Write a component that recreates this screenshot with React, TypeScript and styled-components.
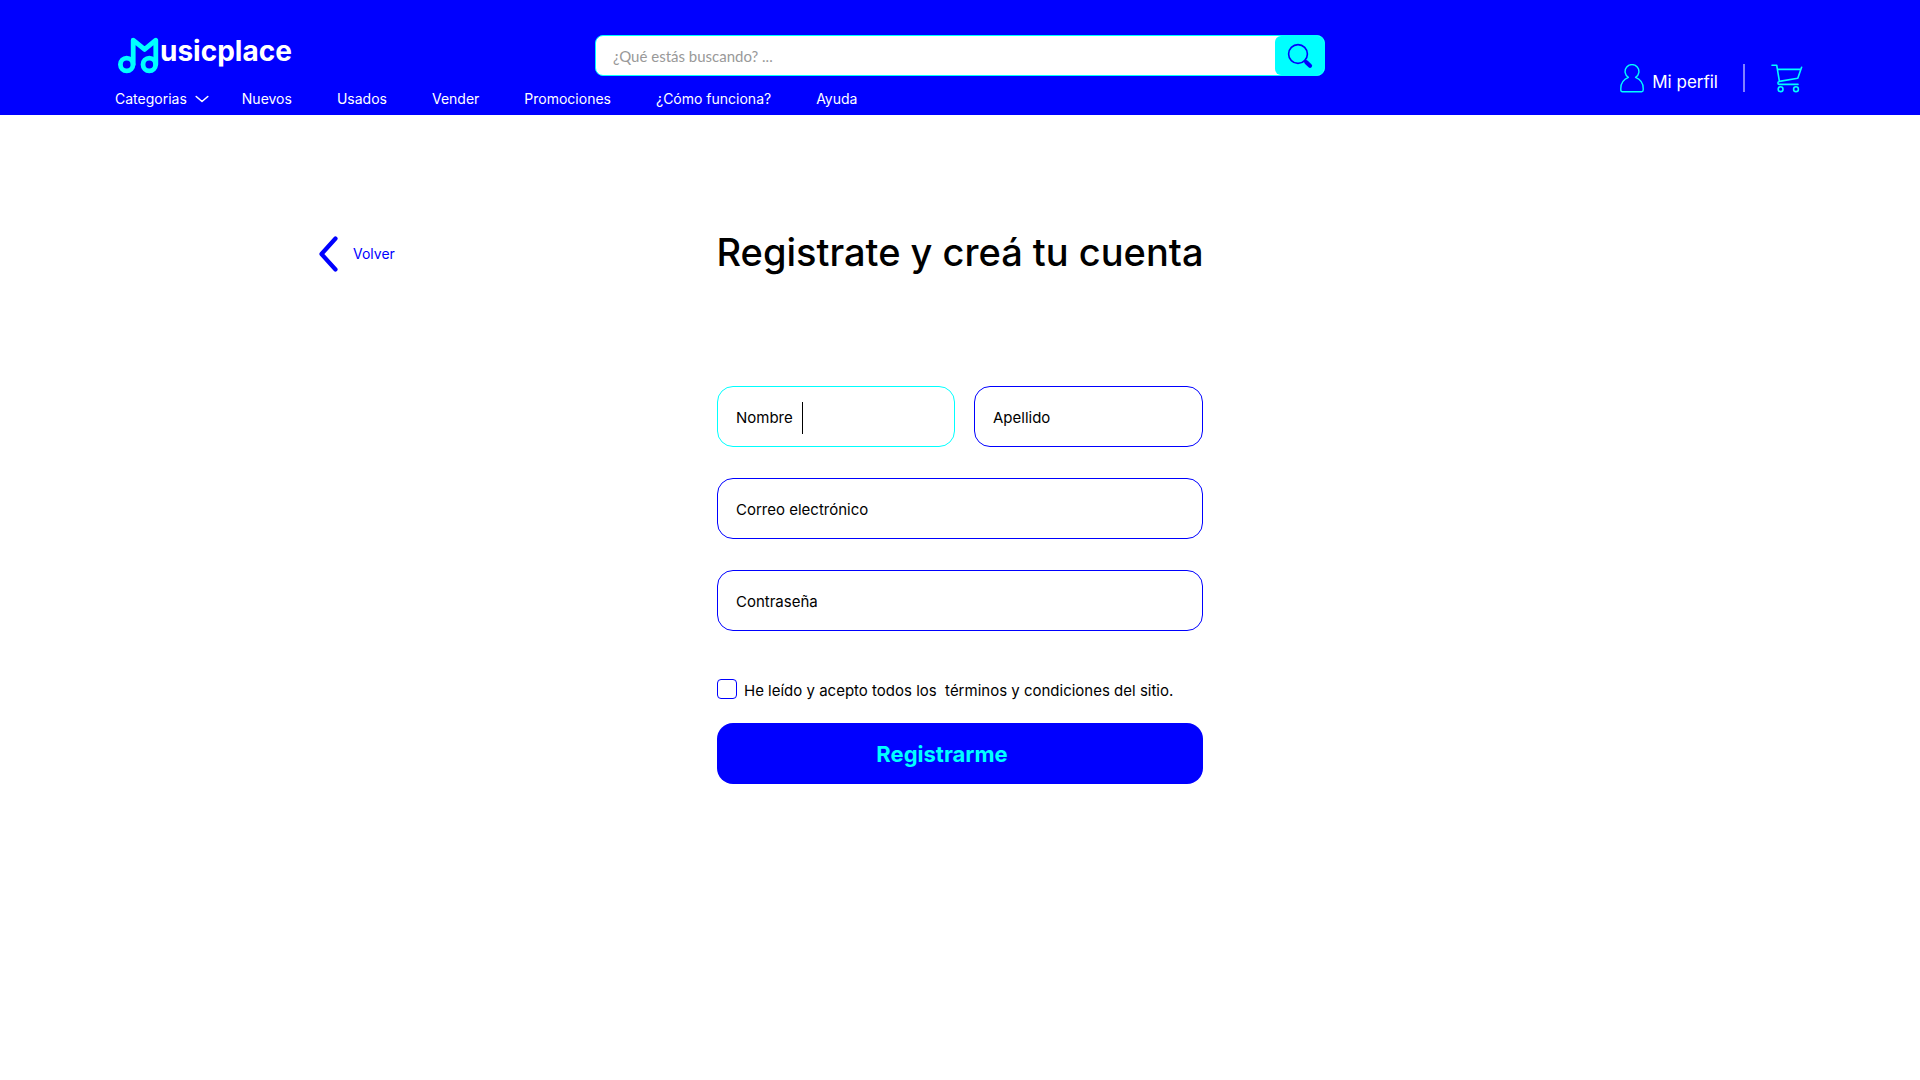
import React from "react";
import styled, { createGlobalStyle } from "styled-components";

const BLUE = "#0000ff";
const CYAN = "#00ffff";

const GlobalStyle = createGlobalStyle`
  *, *::before, *::after { box-sizing: border-box; }
  body {
    margin: 0;
    background: #fff;
    color: #000;
    font-family: Inter, "Liberation Sans", sans-serif;
    font-size: 15px;
    line-height: 20px;
  }
  button, input { font: inherit; }
  a { color: inherit; text-decoration: none; }
  svg { display: block; flex: none; }
`;

const Header = styled.header`
  display: grid;
  grid-template-columns: 1fr minmax(0, 730px) 1fr;
  grid-template-rows: auto 39px;
  padding: 35px 115px 0;
  background: ${BLUE};
  color: #fff;
`;

const Logo = styled.a`
  display: flex;
  align-items: flex-start;
  gap: 1px;
  padding: 2px 0 0 3px;
`;

const LogoText = styled.span`
  font-size: 28px;
  line-height: 28px;
  font-weight: 700;
`;

const Search = styled.form`
  display: flex;
  height: 41px;
  border: 1px solid ${CYAN};
  border-radius: 8px;
  background: #fff;
`;

const SearchInput = styled.input`
  flex: 1;
  min-width: 0;
  padding: 0 17px;
  border: 0;
  border-radius: 8px;
  outline: 0;
  background: transparent;
  font-family: Lato, "Open Sans", sans-serif;
  color: #333;
  &::placeholder { color: #999; opacity: 1; }
`;

const SearchButton = styled.button`
  display: grid;
  place-items: center;
  width: 49px;
  padding: 0;
  border: 0;
  border-radius: 6px;
  background: ${CYAN};
  cursor: pointer;
`;

const Nav = styled.nav`
  grid-column: 1 / 3;
  grid-row: 2;
  display: flex;
  align-items: center;
  gap: 45px;
  padding-top: 7px;
  font-size: 14px;
  white-space: nowrap;
`;

const NavMenu = styled.a`
  display: flex;
  align-items: center;
  gap: 8px;
  margin-right: -12px;
`;

const Account = styled.div`
  grid-column: 3;
  grid-row: 1 / 3;
  display: flex;
  align-items: center;
  justify-content: flex-end;
  padding: 6px 2px 0 0;
`;

const Profile = styled.a`
  display: flex;
  align-items: center;
  gap: 8px;
  font-size: 17px;
  line-height: 24px;
`;

const ProfileName = styled.span`
  padding-top: 7px;
`;

const Divider = styled.span`
  width: 2px;
  height: 28px;
  margin: 0 26px 0 25px;
  background: #8080ff;
`;

const Main = styled.main`
  padding: 111px 317px 0;
`;

const TitleRow = styled.div`
  display: grid;
  grid-template-columns: 1fr auto 1fr;
  align-items: center;
`;

const Back = styled.a`
  justify-self: start;
  display: flex;
  align-items: center;
  gap: 15px;
  padding: 4px 0 0 2px;
  color: ${BLUE};
  font-size: 14px;
`;

const Title = styled.h1`
  margin: 0;
  font-size: 38px;
  line-height: 52px;
  font-weight: 500;
  white-space: nowrap;
`;

const Form = styled.form`
  display: flex;
  flex-direction: column;
  gap: 31px;
  max-width: 486px;
  margin: 108px auto 0;
`;

const NameRow = styled.div`
  display: grid;
  grid-template-columns: minmax(0, 238fr) minmax(0, 229fr);
  gap: 19px;
`;

const Field = styled.div<{ $active?: boolean }>`
  display: flex;
  align-items: center;
  height: 61px;
  padding: 2px 18px 0;
  border: 1px solid ${(p) => (p.$active ? CYAN : BLUE)};
  border-radius: 16px;
`;

const Caret = styled.span`
  width: 1px;
  height: 32px;
  margin-left: 9px;
  background: #000;
`;

const FieldInput = styled.input`
  flex: 1;
  min-width: 0;
  height: 100%;
  padding: 0 0 0 8px;
  border: 0;
  outline: 0;
  background: transparent;
`;

const Terms = styled.div`
  display: flex;
  align-items: center;
  gap: 7px;
  margin-top: 15px;
  white-space: pre;
`;

const Checkbox = styled.input`
  appearance: none;
  flex: none;
  width: 20px;
  height: 20px;
  margin: 0;
  border: 1px solid ${BLUE};
  border-radius: 4px;
  &:checked { background: ${BLUE}; }
`;

const TermsLabel = styled.label`
  padding-top: 4px;
`;

const Submit = styled.button`
  height: 61px;
  margin-top: -9px;
  padding: 0 36px 0 0;
  border: 0;
  border-radius: 16px;
  background: ${BLUE};
  color: ${CYAN};
  font-size: 22px;
  font-weight: 700;
  cursor: pointer;
`;

const LogoMark = () => (
  <svg width="41" height="38" viewBox="0 0 41 38" fill="none" stroke={CYAN} strokeWidth="4.8" strokeLinecap="round" strokeLinejoin="round" aria-hidden="true">
    <circle cx="8.7" cy="27.5" r="6.3" />
    <circle cx="31.3" cy="27.5" r="6.3" />
    <path d="M15.2 27.5V3.2L26.6 12.4L37.8 3.2V27.5" />
  </svg>
);

const SearchIcon = () => (
  <svg width="26" height="26" viewBox="0 0 26 26" fill="none" stroke={BLUE} strokeLinecap="round" aria-hidden="true">
    <circle cx="11" cy="11" r="9.4" strokeWidth="1.6" />
    <path d="M17.7 17.7L19 19" strokeWidth="2" />
    <path d="M19.3 19.3L23 22.8" strokeWidth="4.2" />
  </svg>
);

const ChevronDown = () => (
  <svg width="14" height="8" viewBox="0 0 14 8" fill="none" stroke="#fff" strokeWidth="1.6" strokeLinecap="round" strokeLinejoin="round" aria-hidden="true">
    <path d="M1.2 1.5L7 6.5L12.8 1.5" />
  </svg>
);

const UserIcon = () => (
  <svg width="24" height="29" viewBox="0 0 24 29" fill="none" stroke={CYAN} strokeWidth="1.4" strokeLinejoin="round" aria-hidden="true">
    <path d="M8.4 13.4A6.9 6.9 0 1 1 15.6 13.4C20.4 15.4 23.2 19.4 23.2 24.4V26.1Q23.2 27.8 21.6 27.8H2.4Q.8 27.8 .8 26.1V24.4C.8 19.4 3.6 15.4 8.4 13.4Z" />
  </svg>
);

const CartIcon = () => (
  <svg width="32" height="29" viewBox="0 0 32 29" fill="none" stroke={CYAN} strokeWidth="1.6" strokeLinecap="round" strokeLinejoin="round" aria-hidden="true">
    <path d="M1 1.2H5.7L8.4 17.4L26.8 14.2L30.6 3.2M6.4 5.4H29.8M8.4 17.4Q6.9 17.8 6.9 19Q6.9 20.4 8.5 20.4H27" />
    <circle cx="9.6" cy="25.2" r="2.4" />
    <circle cx="25" cy="25.2" r="2.4" />
  </svg>
);

const ChevronLeft = () => (
  <svg width="19" height="36" viewBox="0 0 19 36" fill="none" stroke={BLUE} strokeWidth="4.2" strokeLinecap="round" strokeLinejoin="round" aria-hidden="true">
    <path d="M16.5 2.5L2.5 18L16.5 33.5" />
  </svg>
);

const links = ["Nuevos", "Usados", "Vender", "Promociones", "¿Cómo funciona?", "Ayuda"];

export default function App() {
  return (
    <>
      <GlobalStyle />
      <Header>
        <Logo href="#">
          <LogoMark />
          <LogoText>usicplace</LogoText>
        </Logo>
        <Search role="search">
          <SearchInput type="text" aria-label="Buscar" placeholder="¿Qué estás buscando? ..." />
          <SearchButton type="button" aria-label="Buscar">
            <SearchIcon />
          </SearchButton>
        </Search>
        <Nav>
          <NavMenu href="#">
            Categorias
            <ChevronDown />
          </NavMenu>
          {links.map((link) => (
            <a key={link} href="#">{link}</a>
          ))}
        </Nav>
        <Account>
          <Profile href="#">
            <UserIcon />
            <ProfileName>Mi perfil</ProfileName>
          </Profile>
          <Divider />
          <a href="#" aria-label="Carrito">
            <CartIcon />
          </a>
        </Account>
      </Header>
      <Main>
        <TitleRow>
          <Back href="#">
            <ChevronLeft />
            Volver
          </Back>
          <Title>Registrate y creá tu cuenta</Title>
        </TitleRow>
        <Form>
          <NameRow>
            <Field $active>
              <label htmlFor="nombre">Nombre</label>
              <Caret />
              <FieldInput id="nombre" type="text" />
            </Field>
            <Field>
              <label htmlFor="apellido">Apellido</label>
              <FieldInput id="apellido" type="text" />
            </Field>
          </NameRow>
          <Field>
            <label htmlFor="correo">Correo electrónico</label>
            <FieldInput id="correo" type="email" />
          </Field>
          <Field>
            <label htmlFor="contrasena">Contraseña</label>
            <FieldInput id="contrasena" type="password" />
          </Field>
          <Terms>
            <Checkbox id="terminos" type="checkbox" />
            <TermsLabel htmlFor="terminos">{"He leído y acepto todos los  términos y condiciones del sitio."}</TermsLabel>
          </Terms>
          <Submit type="button">Registrarme</Submit>
        </Form>
      </Main>
    </>
  );
}
